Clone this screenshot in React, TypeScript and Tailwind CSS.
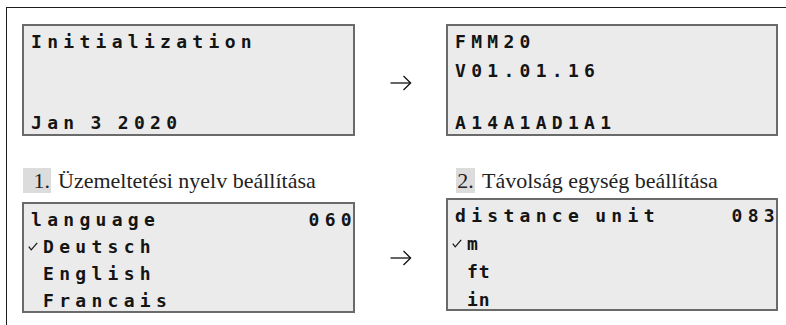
import type { ReactNode } from 'react'

// ─── Pieces ───────────────────────────────────────────────────────

const lcdFont = { fontFamily: '"DejaVu Sans Mono", "Liberation Mono", monospace' }
const serifFont = { fontFamily: '"Liberation Serif", "DejaVu Serif", serif' }

function Panel({ className, children }: { className: string; children: ReactNode }) {
    return (
        <div
            className={`box-border border-2 border-[#6a6a6a] bg-[#ebebeb] pt-[2px] text-[18px] font-bold tracking-[5.3px] [word-spacing:-5px] text-[#141414] ${className}`}
            style={lcdFont}
        >
            {children}
        </div>
    )
}

function Row({ children, className = '' }: { children?: ReactNode; className?: string }) {
    return <div className={`flex h-[27px] items-center leading-[27px] whitespace-pre ${className}`}>{children}</div>
}

function Check() {
    return (
        <svg width="10" height="9" viewBox="0 0 10 9" className="shrink-0">
            <polyline points="0.8,4.6 3.2,7.8 9.2,0.8" fill="none" stroke="#141414" strokeWidth="1.2" />
        </svg>
    )
}

function Arrow() {
    return (
        <svg width="22" height="16" viewBox="0 0 22 16">
            <line x1="0.5" y1="8" x2="20.5" y2="8" stroke="#111" strokeWidth="1.3" />
            <polyline points="13.5,1 20.6,8 13.5,15" fill="none" stroke="#111" strokeWidth="1.3" />
        </svg>
    )
}

function Step({ n, text, boxClass }: { n: string; text: string; boxClass: string }) {
    return (
        <div className="flex h-[25px] items-center text-[22px] leading-[25px] text-[#222]" style={serifFont}>
            <span className={`flex h-[25px] items-center bg-[#dcdcdc] ${boxClass}`}>{n}</span>
            <span className="ml-[7px]">{text}</span>
        </div>
    )
}

// ─── Page ─────────────────────────────────────────────────────────

export default function App() {
    return (
        <div className="h-[325px] w-[786px] overflow-hidden bg-white">
            <div className="ml-[6px] mt-[7px] h-[318px] border-l border-t border-[#1c1c1c] pl-[15px] pt-[16px]">
                {/* start-up screens */}
                <div className="flex">
                    <Panel className="h-[112px] w-[333px] pl-[7px]">
                        <Row>Initialization</Row>
                        <Row />
                        <Row />
                        <Row>Jan 3 2020</Row>
                    </Panel>
                    <div className="flex w-[91px] items-center justify-center pt-[5px]">
                        <Arrow />
                    </div>
                    <Panel className="h-[112px] w-[332px] pl-[7px]">
                        <Row>FMM20</Row>
                        <Row className="mt-[2px]">V01.01.16</Row>
                        <Row className="-mt-[2px]" />
                        <Row>A14A1AD1A1</Row>
                    </Panel>
                </div>

                {/* step captions */}
                <div className="mt-[32px] flex">
                    <div className="w-[424px] pl-[1px]">
                        <Step n="1." text="Üzemeltetési nyelv beállítása" boxClass="w-[28px] justify-end pr-[1px]" />
                    </div>
                    <div className="pl-[10px]">
                        <Step n="2." text="Távolság egység beállítása" boxClass="w-[19px] justify-center" />
                    </div>
                </div>

                {/* settings screens */}
                <div className="mt-[9px] flex items-start">
                    <Panel className="h-[111px] w-[333px]">
                        <Row className="justify-between pl-[7px]">
                            <span>language</span>
                            <span className="-mr-[4px]">060</span>
                        </Row>
                        <Row className="pl-[4px]">
                            <span className="flex w-[15px] items-center"><Check /></span>
                            <span>Deutsch</span>
                        </Row>
                        <Row className="pl-[19px]">English</Row>
                        <Row className="pl-[19px]">Francais</Row>
                    </Panel>
                    <div className="flex h-[111px] w-[91px] items-center justify-center">
                        <Arrow />
                    </div>
                    <Panel className="-mt-[4px] h-[113px] w-[332px]">
                        <Row className="justify-between pl-[7px]">
                            <span>distance unit</span>
                            <span className="-mr-[4px]">083</span>
                        </Row>
                        <div className="text-[18px] tracking-[1px]">
                            <Row className="h-[28px] pl-[4px]">
                                <span className="flex w-[15px] items-center"><Check /></span>
                                <span>m</span>
                            </Row>
                            <Row className="h-[28px] pl-[19px]">ft</Row>
                            <Row className="h-[28px] pl-[19px]">in</Row>
                        </div>
                    </Panel>
                </div>
            </div>
        </div>
    )
}
